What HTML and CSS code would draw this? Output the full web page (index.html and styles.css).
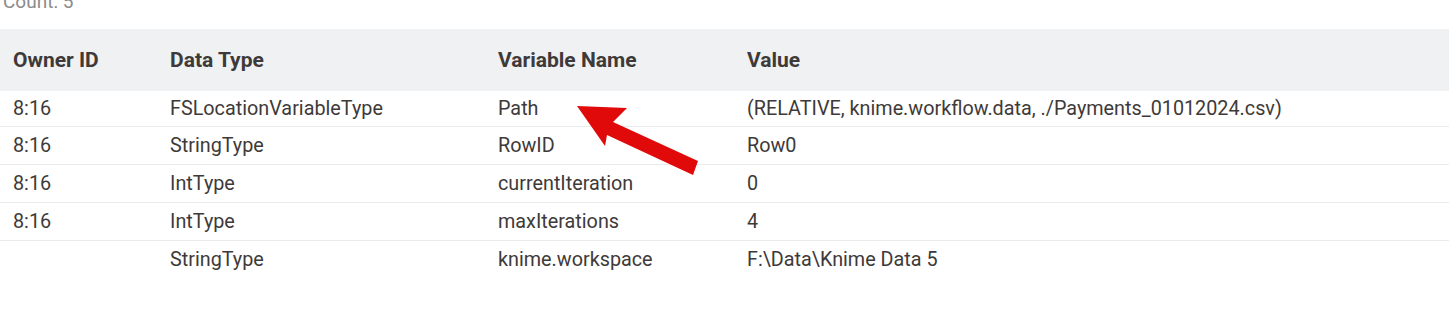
FILE: index.html
```html
<!DOCTYPE html>
<html lang="en">
<head>
<meta charset="utf-8">
<title>Flow Variables</title>
<link rel="stylesheet" href="styles.css">
</head>
<body>
<div class="page">
  <div class="count">Count: 5</div>
  <div class="table-wrap">
    <table class="vars">
      <colgroup>
        <col class="c1"><col class="c2"><col class="c3"><col class="c4">
      </colgroup>
      <thead>
        <tr><th>Owner ID</th><th>Data Type</th><th>Variable Name</th><th>Value</th></tr>
      </thead>
      <tbody>
        <tr><td>8:16</td><td>FSLocationVariableType</td><td>Path</td><td>(RELATIVE, knime.workflow.data, ./Payments_01012024.csv)</td></tr>
        <tr><td>8:16</td><td>StringType</td><td>RowID</td><td>Row0</td></tr>
        <tr><td>8:16</td><td>IntType</td><td>currentIteration</td><td>0</td></tr>
        <tr><td>8:16</td><td>IntType</td><td>maxIterations</td><td>4</td></tr>
        <tr class="last"><td></td><td>StringType</td><td>knime.workspace</td><td>F:\Data\Knime Data 5</td></tr>
      </tbody>
    </table>
    <svg class="arrow" width="140" height="90" viewBox="0 0 140 90">
      <polygon points="7,8 57,10 43,24 128,63 123,77 37,37 35,48" fill="#e10a0a"/>
    </svg>
  </div>
</div>
</body>
</html>
```
FILE: styles.css
```css
html, body {
  margin: 0;
  padding: 0;
  background: #ffffff;
}
body {
  font-family: Roboto, "Noto Sans", sans-serif;
  color: #3e3a39;
  width: 1449px;
  height: 313px;
  overflow: hidden;
}
.page {
  position: relative;
}
.count {
  font-size: 19px;
  line-height: 22px;
  color: #8b8b8b;
  padding-left: 3px;
  margin-top: -9px;
  height: 22px;
}
.table-wrap {
  position: relative;
  margin-top: 16px;
}
.vars {
  width: 1449px;
  border-collapse: collapse;
  table-layout: fixed;
  font-size: 19.8px;
}
.c1 { width: 157px; }
.c2 { width: 328px; }
.c3 { width: 249px; }
.c4 { width: auto; }
.vars thead tr {
  background: #f0f1f2;
  height: 62px;
}
.vars th {
  text-align: left;
  font-weight: 700;
  font-size: 21px;
  padding: 0 0 0 13px;
  color: #3e3a39;
}
.vars td {
  padding: 0 0 0 13px;
  height: 37px;
  border-bottom: 1px solid #eaebec;
  white-space: nowrap;
}
.vars tbody tr:first-child td {
  height: 35px;
}
.vars tr.last td {
  border-bottom: none;
}
.arrow {
  position: absolute;
  left: 570px;
  top: 69px;
}
```
